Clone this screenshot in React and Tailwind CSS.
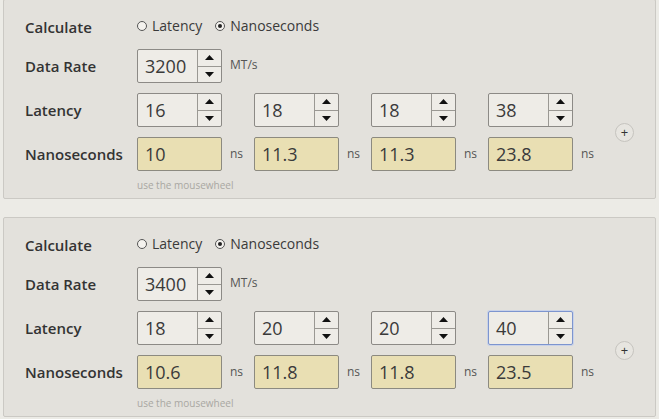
import React from "react";

const font = { fontFamily: '"Open Sans", "Noto Sans", sans-serif' };

function Arrows() {
  return (
    <div className="flex w-[24px] flex-col border-l border-[#9a9893]">
      <div className="flex flex-1 items-center justify-center border-b border-[#9a9893]">
        <svg width="9" height="5" viewBox="0 0 9 5"><path d="M0 5 L4.5 0 L9 5 Z" fill="#111" /></svg>
      </div>
      <div className="flex flex-1 items-center justify-center">
        <svg width="9" height="5" viewBox="0 0 9 5"><path d="M0 0 L4.5 5 L9 0 Z" fill="#111" /></svg>
      </div>
    </div>
  );
}

function Spinner({ value, focus }) {
  return (
    <div
      className={
        "flex h-[34px] w-[85px] rounded-[2px] border bg-[#eeece7] " +
        (focus ? "border-[#7d95cf] shadow-[0_0_0_1px_#c9d2e8]" : "border-[#8c8a86]")
      }
    >
      <div className="flex flex-1 items-center pl-[7px] text-[18px] text-[#3a3a3a]">{value}</div>
      <Arrows />
    </div>
  );
}

function NsBox({ value }) {
  return (
    <div className="flex items-center">
      <div className="flex h-[34px] w-[85px] items-center rounded-[2px] border border-[#8c8a80] bg-[#e9dfb3] pl-[7px] text-[18px] text-[#3a3a3a]">
        {value}
      </div>
      <span className="ml-[8px] text-[12px] text-[#555]">ns</span>
    </div>
  );
}

function Radio({ checked, label }) {
  return (
    <label className="flex items-center gap-[5px] text-[14px] text-[#3a3a3a]">
      <span className="flex h-[10px] w-[10px] items-center justify-center rounded-full border border-[#555] bg-[#f4f2ee]">
        {checked && <span className="h-[4px] w-[4px] rounded-full bg-[#222]" />}
      </span>
      {label}
    </label>
  );
}

function Panel({ data, top }) {
  return (
    <div
      className={
        "rounded-[2px] border border-[#cbc9c4] bg-[#e3e1dc] pl-[21px] pt-[15px] pb-[6px] " + top
      }
    >
      <div className="grid grid-cols-[112px_117px_117px_117px_117px_1fr] gap-y-[10px] items-center">
        <div className="flex h-[24px] items-center pt-[1px] text-[15px] font-semibold text-[#333]">Calculate</div>
        <div className="col-span-5 flex h-[24px] items-center gap-[13px] pb-[3px]">
          <Radio label="Latency" />
          <Radio label="Nanoseconds" checked />
        </div>

        <div className="text-[15px] font-semibold text-[#333]">Data Rate</div>
        <div className="col-span-5 flex items-center">
          <Spinner value={data.rate} />
          <span className="ml-[8px] mb-[2px] text-[12px] text-[#555]">MT/s</span>
        </div>

        <div className="text-[15px] font-semibold text-[#333]">Latency</div>
        {data.lat.map((v, i) => (
          <div key={i}>
            <Spinner value={v} focus={data.focus === i} />
          </div>
        ))}
        <div className="row-span-2 flex items-center pl-[10px]">
          <div className="flex h-[19px] w-[19px] items-center justify-center rounded-full border border-[#c6c4bf] bg-[#e7e5e0] text-[13px] leading-none text-[#333]">
            +
          </div>
        </div>

        <div className="text-[15px] font-semibold text-[#333]">Nanoseconds</div>
        {data.ns.map((v, i) => (
          <div key={i}>
            <NsBox value={v} />
          </div>
        ))}
      </div>
      <div className="ml-[112px] mt-[7px] text-[10px] leading-[14px] text-[#a9a7a2]">use the mousewheel</div>
    </div>
  );
}

export default function App() {
  const a = { rate: "3200", lat: ["16", "18", "18", "38"], ns: ["10", "11.3", "11.3", "23.8"] };
  const b = { rate: "3400", lat: ["18", "20", "20", "40"], ns: ["10.6", "11.8", "11.8", "23.5"], focus: 3 };
  return (
    <div style={font} className="h-[419px] w-[659px] overflow-hidden bg-[#ecebe6] pl-[3px] pr-[3px]">
      <Panel data={a} top="-mt-px" />
      <Panel data={b} top="mt-[18px]" />
    </div>
  );
}
